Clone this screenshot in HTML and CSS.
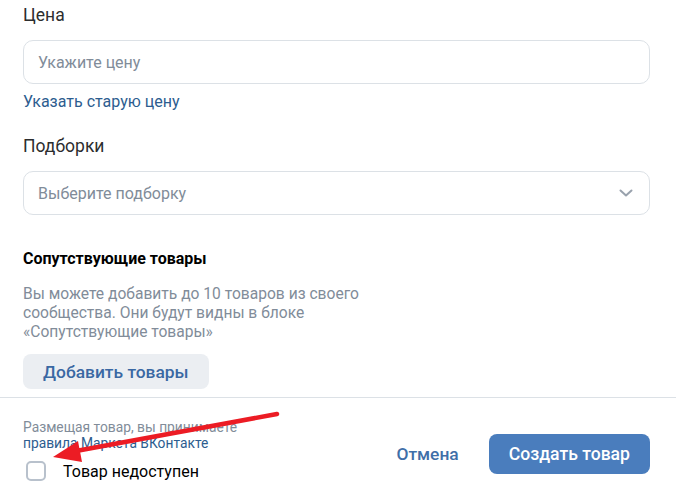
FILE: index.html
```html
<!DOCTYPE html>
<html lang="ru">
<head>
    <meta charset="UTF-8">
    <meta name="viewport" content="width=device-width, initial-scale=1.0">
    <title>Создать товар</title>
    <link rel="stylesheet" href="styles.css">
</head>
<body>
    <div class="product-form">
        <div class="form-body">
            <div class="field">
                <label class="field-label" for="price">Цена</label>
                <input type="text" id="price" class="field-input" placeholder="Укажите цену">
                <a href="#" class="old-price-link">Указать старую цену</a>
            </div>

            <div class="field">
                <label class="field-label" for="album">Подборки</label>
                <div class="select-box">
                    <span class="select-placeholder">Выберите подборку</span>
                    <svg class="select-chevron" width="14" height="8" viewBox="0 0 14 8">
                        <path d="M1.5 1.5 L7 6.5 L12.5 1.5" fill="none" stroke="#99a2ad" stroke-width="2" stroke-linecap="round" stroke-linejoin="round"/>
                    </svg>
                </div>
            </div>

            <div class="related">
                <h4>Сопутствующие товары</h4>
                <p>Вы можете добавить до 10 товаров из своего сообщества. Они будут видны в блоке «Сопутствующие товары»</p>
                <button type="button" class="add-btn">Добавить товары</button>
            </div>
        </div>

        <div class="form-footer">
            <div class="footer-left">
                <div class="terms">
                    Размещая товар, вы принимаете<br>
                    <a href="#">правила Маркета ВКонтакте</a>
                </div>
                <label class="check-row">
                    <span class="check-box"></span>
                    <span>Товар недоступен</span>
                </label>
            </div>
            <div class="footer-actions">
                <button type="button" class="cancel-btn">Отмена</button>
                <button type="button" class="create-btn">Создать товар</button>
            </div>
        </div>

        <svg class="hint-arrow" width="676" height="502" viewBox="0 0 676 502">
            <line x1="277" y1="414" x2="76" y2="451" stroke="#ec1c24" stroke-width="4.5" stroke-linecap="round"/>
            <polygon points="53,457 78,441 82,462" fill="#ec1c24"/>
        </svg>
    </div>
</body>
</html>
```

FILE: styles.css
```css
* {
    margin: 0;
    padding: 0;
    box-sizing: border-box;
}

body {
    font-family: 'Roboto', 'Liberation Sans', sans-serif;
    background-color: #ffffff;
    color: #000000;
    width: 676px;
    height: 502px;
    overflow: hidden;
}

.product-form {
    position: relative;
    height: 502px;
}

.form-body {
    padding: 5px 26px 0 23px;
}

.field {
    margin-bottom: 24px;
}

.field-label {
    display: block;
    font-size: 17.5px;
    line-height: 20px;
    color: #2c2d2e;
    margin-bottom: 15px;
}

.field-input,
.select-box {
    width: 100%;
    height: 44px;
    border: 1px solid #dce1e6;
    border-radius: 10px;
    padding: 0 14px;
    font-family: inherit;
    font-size: 16px;
    color: #000;
    outline: none;
    background: #fff;
}

.field-input::placeholder {
    color: #818c99;
}

.old-price-link {
    display: block;
    margin-top: 8px;
    font-size: 16px;
    line-height: 20px;
    color: #2d5d8f;
    text-decoration: none;
}

.select-box {
    display: flex;
    align-items: center;
    justify-content: space-between;
    padding-right: 16px;
}

.select-placeholder {
    color: #818c99;
}

.related {
    margin-top: 34px;
}

.related h4 {
    font-size: 16px;
    font-weight: 700;
    line-height: 20px;
    color: #000;
}

.related p {
    margin-top: 16px;
    max-width: 380px;
    font-size: 15.6px;
    line-height: 19px;
    color: #818c99;
}

.add-btn {
    margin-top: 12px;
    height: 35px;
    padding: 0 20px;
    border: none;
    border-radius: 8px;
    background-color: #ebeef2;
    color: #3a68a3;
    font-family: inherit;
    font-size: 17.4px;
    font-weight: 500;
    cursor: pointer;
}

.form-footer {
    position: absolute;
    left: 0;
    right: 0;
    top: 397px;
    border-top: 1px solid #dce1e6;
    padding: 21px 26px 0 23px;
    display: flex;
    justify-content: space-between;
    align-items: flex-start;
}

.terms {
    font-size: 13.8px;
    line-height: 16px;
    color: #818c99;
}

.terms a {
    color: #2d5d8f;
    text-decoration: none;
}

.check-row {
    display: flex;
    align-items: center;
    margin-top: 10px;
    font-size: 16px;
    color: #000;
}

.check-box {
    width: 20px;
    height: 20px;
    margin-left: 3px;
    margin-right: 17px;
    border: 2px solid #b8c1cc;
    border-radius: 5px;
}

.footer-actions {
    display: flex;
    align-items: center;
    gap: 30px;
    margin-top: 15px;
}

.cancel-btn {
    border: none;
    background: none;
    color: #3f6fa8;
    font-family: inherit;
    font-size: 17.4px;
    font-weight: 500;
    cursor: pointer;
}

.create-btn {
    height: 40px;
    padding: 0 20px;
    border: none;
    border-radius: 8px;
    background-color: #4a7dbd;
    color: #ffffff;
    font-family: inherit;
    font-size: 17.6px;
    font-weight: 500;
    cursor: pointer;
}

.hint-arrow {
    position: absolute;
    left: 0;
    top: 0;
    pointer-events: none;
}
```
